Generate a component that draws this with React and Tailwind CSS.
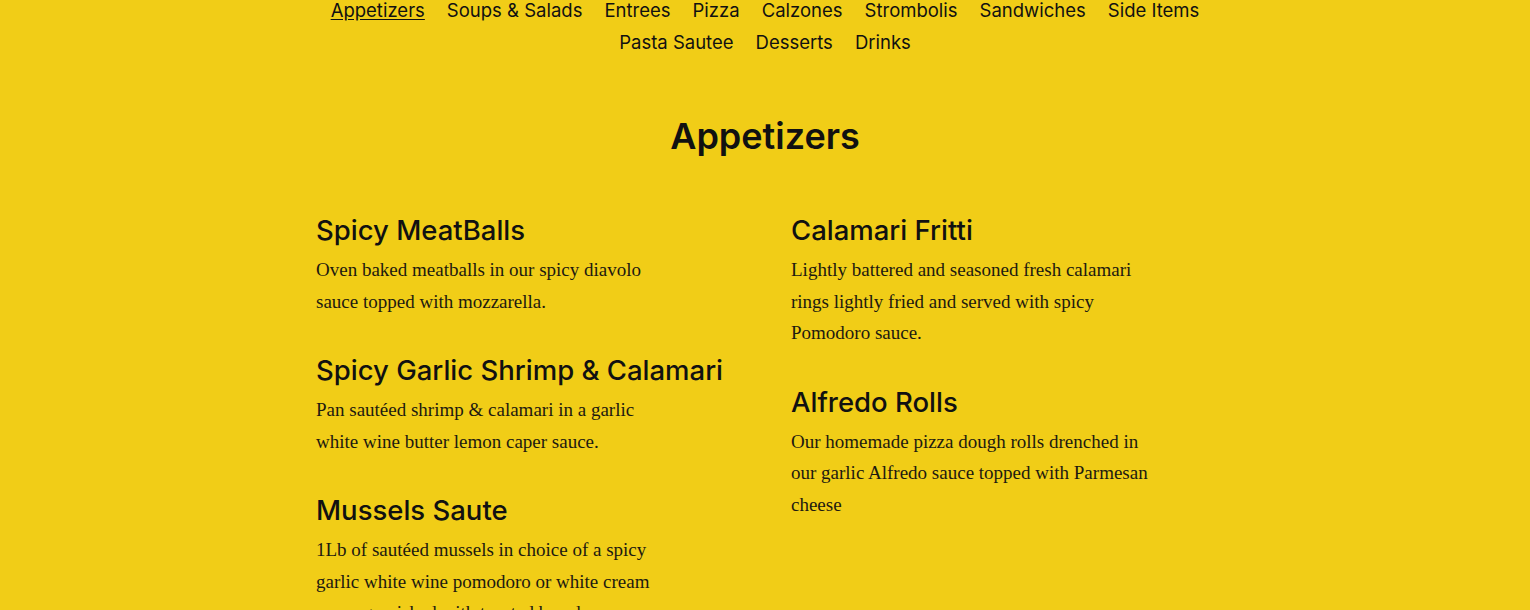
const NAV_ROWS = [
  ['Appetizers', 'Soups & Salads', 'Entrees', 'Pizza', 'Calzones', 'Strombolis', 'Sandwiches', 'Side Items'],
  ['Pasta Sautee', 'Desserts', 'Drinks'],
];

const LEFT = [
  { name: 'Spicy MeatBalls', desc: 'Oven baked meatballs in our spicy diavolo sauce topped with mozzarella.' },
  { name: 'Spicy Garlic Shrimp & Calamari', desc: 'Pan sautéed shrimp & calamari in a garlic white wine butter lemon caper sauce.' },
  { name: 'Mussels Saute', desc: '1Lb of sautéed mussels in choice of a spicy garlic white wine pomodoro or white cream sauce garnished with toasted bread.' },
];

const RIGHT = [
  { name: 'Calamari Fritti', desc: 'Lightly battered and seasoned fresh calamari rings lightly fried and served with spicy Pomodoro sauce.' },
  { name: 'Alfredo Rolls', desc: 'Our homemade pizza dough rolls drenched in our garlic Alfredo sauce topped with Parmesan cheese' },
];

function MenuItem({ name, desc }) {
  return (
    <div className="flex flex-col gap-2">
      <h3 className="text-[27.5px] leading-[31px] font-medium text-[#111] font-['Inter',sans-serif]">{name}</h3>
      <p className="text-[19px] leading-[31.5px] text-[#1d1a10] max-w-[360px] font-['Liberation_Serif',serif]">{desc}</p>
    </div>
  );
}

export default function App() {
  return (
    <div className="min-h-[610px] bg-[#f1cd17] overflow-hidden">
      {/* Category nav */}
      <nav className="-mt-[6px] flex flex-col items-center font-['Inter',sans-serif] text-[18.5px] leading-[32px] text-[#111]">
        {NAV_ROWS.map((row, i) => (
          <div key={i} className="flex gap-[22px]">
            {row.map(label => (
              <a key={label} href="#" className={label === 'Appetizers' ? 'underline underline-offset-2' : ''}>
                {label}
              </a>
            ))}
          </div>
        ))}
      </nav>

      <h2 className="mt-[57px] text-center text-[36px] leading-[43px] font-semibold text-[#111] font-['Inter',sans-serif]">
        Appetizers
      </h2>

      <div className="mt-[57px] mx-auto w-[898px] grid grid-cols-2 gap-x-[52px]">
        <div className="flex flex-col gap-[38px]">
          {LEFT.map(item => <MenuItem key={item.name} {...item} />)}
        </div>
        <div className="flex flex-col gap-[38px]">
          {RIGHT.map(item => <MenuItem key={item.name} {...item} />)}
        </div>
      </div>
    </div>
  );
}
